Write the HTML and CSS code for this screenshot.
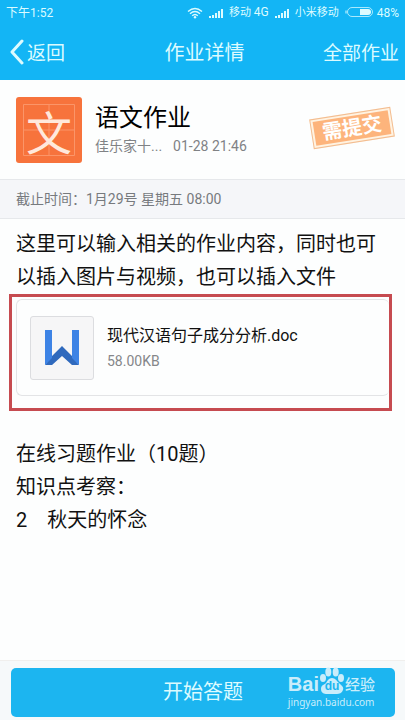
FILE: index.html
```html
<!DOCTYPE html>
<html lang="zh-CN">
<head>
<meta charset="utf-8">
<meta name="viewport" content="width=device-width, initial-scale=1">
<title>作业详情</title>
<link rel="stylesheet" href="styles.css">
</head>
<body>
<header class="header">
  <div class="status">
    <span>下午1:52</span>
    <div class="status-icons">
      <svg class="wifi" viewBox="0 0 16 12" width="16" height="12" aria-hidden="true"><g fill="none" stroke="currentColor" stroke-width="1.4"><path d="M1 4.5Q8-1.5 15 4.5M3 6.7Q8 2.2 13 6.7M5.2 8.8Q8 6.2 10.8 8.8"/></g><circle cx="8" cy="10.3" r="1.2" fill="currentColor"/></svg>
      <svg viewBox="0 0 14 10" width="14" height="10" aria-hidden="true"><path fill="currentColor" d="M0 8h2v2H0zM3 7h2v3H3zM6 5h2v5H6zM9 3h2v7H9zM12 1h2v9h-2z"/></svg>
      <span>移动 <span class="latin">4G</span></span>
      <svg viewBox="0 0 14 10" width="14" height="10" aria-hidden="true"><path fill="currentColor" d="M0 8h2v2H0zM3 7h2v3H3zM6 5h2v5H6zM9 3h2v7H9zM12 1h2v9h-2z"/></svg>
      <span>小米移动</span>
      <span class="battery">
        <svg viewBox="0 0 28 11" width="28" height="11" aria-hidden="true"><rect x="2.5" y=".5" width="25" height="9" rx="4.5" fill="none" stroke="currentColor" opacity=".75"/><path d="M1 3.5v3" stroke="currentColor"/><path d="M15 2h8q3 0 3 3t-3 3h-8z" fill="currentColor"/></svg>
        <span class="latin">48%</span>
      </span>
    </div>
  </div>
  <nav class="nav">
    <a class="back" href="#"><svg viewBox="0 0 14 26" width="14" height="26" aria-hidden="true"><path d="M12 2 2 13l10 11" fill="none" stroke="currentColor" stroke-width="3" stroke-linecap="round" stroke-linejoin="round"/></svg>返回</a>
    <h1>作业详情</h1>
    <a class="all" href="#">全部作业</a>
  </nav>
</header>
<main>
  <section class="summary">
    <div class="subject">
      <svg viewBox="0 0 66 66" width="66" height="66" aria-hidden="true">
        <rect width="66" height="66" rx="3" fill="#f7733c"/>
        <path d="M7.5 7.5h51v51h-51zM33 7.5v51M7.5 33h51" fill="none" stroke="#fb9568"/>
      </svg>
      <span class="subject-mark">文</span>
    </div>
    <div class="info">
      <h2>语文作业</h2>
      <p><span class="class-name">佳乐家十...</span><time>01-28 21:46</time></p>
    </div>
    <div class="stamp"><span>需提交</span></div>
  </section>
  <p class="deadline">截止时间：1月29号 星期五 08:00</p>
  <article class="content">
    <p>这里可以输入相关的作业内容，同时也可以插入图片与视频，也可以插入文件</p>
  </article>
  <div class="highlight">
    <a class="file" href="#">
      <span class="file-icon">
        <svg viewBox="0 0 34 36" width="34" height="36" aria-hidden="true">
          <path d="M0 35 7 26 17 16l10 10 7 9h-7l-10-9-10 9z" fill="#2f69bd"/>
          <path d="M0 0h7v28l-7 7zM27 0h7v35l-7-7z" fill="#3d83e5"/>
        </svg>
      </span>
      <span class="file-text"><span class="file-name">现代汉语句子成分分析.doc</span><span class="file-size">58.00KB</span></span>
    </a>
  </div>
  <article class="exercise">
    <p>在线习题作业（10题）</p>
    <p>知识点考察：</p>
    <p>2　秋天的怀念</p>
  </article>
</main>
<footer class="footer">
  <button type="button">开始答题</button>
  <div class="watermark">
    <div class="brand">
      <span>Bai</span>
      <span class="paw">
        <svg viewBox="0 0 26 28" width="26" height="28" aria-hidden="true"><g fill="currentColor"><ellipse cx="4" cy="11" rx="3" ry="4"/><ellipse cx="9.3" cy="5" rx="3" ry="4.5"/><ellipse cx="16.7" cy="5" rx="3" ry="4.5"/><ellipse cx="22" cy="11" rx="3" ry="4"/><path d="M13 11c3 0 5 3 7 5 3 3 5 4 4 7s-4 4-6 4H8c-3 0-6-1-6-5s3-4 5-6c1-2 3-5 6-5z"/></g></svg>
        <span class="du">du</span>
      </span>
      <span class="jingyan">经验</span>
    </div>
    <div class="site">jingyan.baidu.com</div>
  </div>
</footer>
</body>
</html>
```
FILE: styles.css
```css
* {
  box-sizing: border-box;
}

body {
  margin: 0;
  min-height: 100vh;
  display: flex;
  flex-direction: column;
  background: #fdfefe;
  color: #111;
  font-family: Roboto, "Noto Sans CJK SC", sans-serif;
}

h1, h2, p {
  margin: 0;
  font-weight: 400;
}

a {
  color: inherit;
  text-decoration: none;
}

svg {
  display: block;
  flex: none;
}

.header {
  background: #13b5f5;
  color: #dcfbff;
}

.status {
  display: flex;
  justify-content: space-between;
  align-items: center;
  height: 25px;
  padding: 0 6px;
  font-size: 11px;
  line-height: 16px;
}

.status > span,
.latin {
  font-size: 12px;
}

.status-icons {
  display: flex;
  align-items: center;
  gap: 6px;
}

.battery {
  display: flex;
  align-items: center;
  gap: 4px;
}

.nav {
  display: grid;
  grid-template-columns: 1fr auto 1fr;
  align-items: center;
  height: 55px;
  padding: 0 6px 2px 10px;
  font-size: 19px;
}

.nav h1 {
  font-size: 20px;
}

.back {
  display: flex;
  align-items: center;
  gap: 3px;
}

.all {
  justify-self: end;
}

main {
  flex: 1;
}

.summary {
  display: flex;
  align-items: center;
  gap: 13px;
  height: 99px;
  padding: 0 12px 0 16px;
}

.subject {
  display: grid;
  place-items: center;
}

.subject > * {
  grid-area: 1 / 1;
}

.subject-mark {
  font: 400 46px/60px "Noto Sans CJK SC", sans-serif;
  color: #ffe9dc;
}

.info {
  flex: 1;
}

.info h2 {
  font-size: 24px;
  line-height: 32px;
  color: #000;
}

.info p {
  display: flex;
  gap: 11px;
  font-size: 14px;
  line-height: 24px;
  color: #808285;
}

.stamp {
  margin-bottom: 4px;
  padding: 2px;
  border: 1px solid #f3bd91;
  background: #fff3e2;
  transform: rotate(-9deg);
}

.stamp span {
  display: block;
  padding: 0 8px;
  background: #fdb47c;
  color: #fff;
  font-size: 20px;
  font-weight: 700;
  line-height: 24px;
  text-align: center;
}

.deadline {
  padding: 0 16px;
  border: 1px solid #e6e8eb;
  border-width: 1px 0;
  background: #f5f6f9;
  color: #777a7e;
  font-size: 14px;
  line-height: 38px;
}

.content,
.exercise {
  padding: 9px 12px 0 16px;
  font-size: 20px;
  line-height: 33px;
}

.exercise {
  padding: 27px 16px;
}

.highlight {
  margin: 0 13px 0 9px;
  padding: 2px 0 12px 4px;
  border: 3px solid #c64b50;
}

.file {
  display: flex;
  align-items: center;
  gap: 13px;
  height: 97px;
  padding-left: 13px;
  border: 1px solid #e3e4e6;
  border-right: 0;
  border-radius: 6px;
}

.file-icon {
  display: grid;
  place-items: center;
  width: 64px;
  height: 64px;
  border: 1px solid #dcdde0;
  border-radius: 3px;
  background: #f6f6f7;
}

.file-text {
  display: grid;
}

.file-name {
  font-size: 16px;
  line-height: 26px;
}

.file-size {
  font-size: 14px;
  line-height: 24px;
  color: #85878a;
}

.footer {
  position: relative;
  padding: 7px 10px 3px 11px;
  border-top: 1px solid #f0efed;
  background: #f6f9fa;
}

.footer button {
  display: block;
  width: 100%;
  height: 49px;
  padding: 0 0 4px;
  border: 0;
  border-radius: 5px;
  background: #1cb5f0;
  color: #dcfbff;
  font: inherit;
  font-size: 20px;
}

.watermark {
  position: absolute;
  right: 30px;
  bottom: 11px;
  color: #c9edfb;
  pointer-events: none;
}

.brand {
  display: flex;
  align-items: flex-end;
  font: 700 20px/22px "Liberation Sans", sans-serif;
}

.paw {
  position: relative;
}

.du {
  position: absolute;
  inset: auto 0 3px;
  color: #1cb5f0;
  font-size: 12px;
  line-height: 12px;
  text-align: center;
}

.jingyan {
  font: 500 15px/22px "Noto Sans CJK SC", sans-serif;
}

.site {
  font: 10px/14px "Noto Sans", sans-serif;
}
```
